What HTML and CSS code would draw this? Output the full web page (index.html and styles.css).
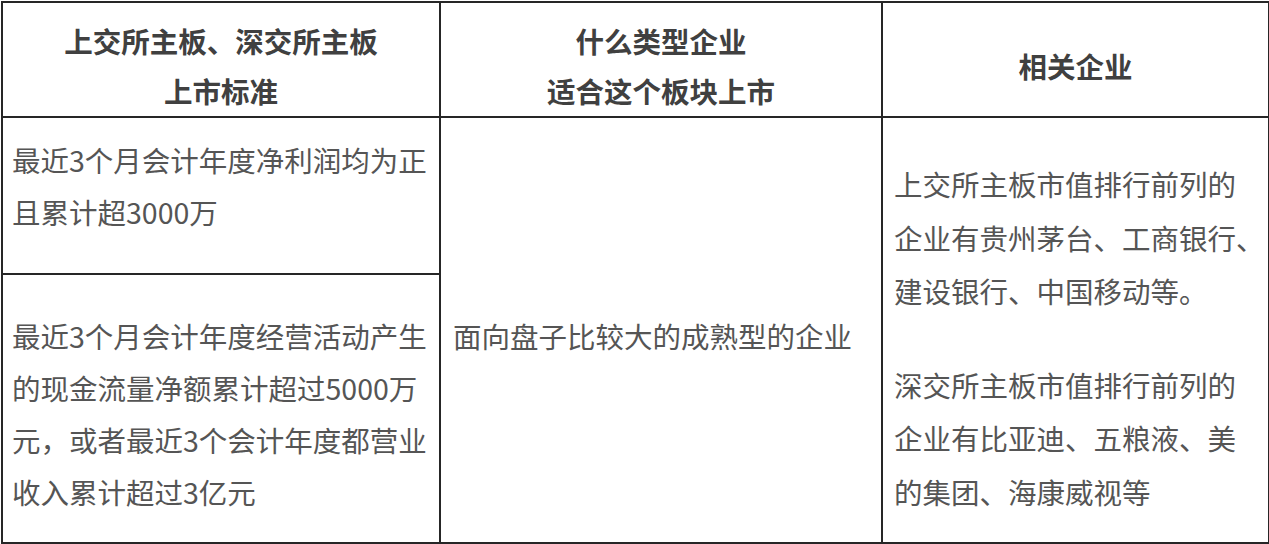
FILE: index.html
```html
<!DOCTYPE html>
<html lang="zh-CN">
<head>
<meta charset="utf-8">
<link rel="stylesheet" href="styles.css">
</head>
<body>
<table class="grid">
  <colgroup>
    <col class="c1">
    <col class="c2">
    <col class="c3">
  </colgroup>
  <thead>
    <tr class="head">
      <th>上交所主板、深交所主板<br>上市标准</th>
      <th>什么类型企业<br>适合这个板块上市</th>
      <th>相关企业</th>
    </tr>
  </thead>
  <tbody>
    <tr class="r1">
      <td class="cell top">最近3个月会计年度净利润均为正<br>且累计超3000万</td>
      <td class="cell mid" rowspan="2">面向盘子比较大的成熟型的企业</td>
      <td class="cell right" rowspan="2">
        <p class="para">上交所主板市值排行前列的<br>企业有贵州茅台、工商银行、<br>建设银行、中国移动等。</p>
        <p class="para second">深交所主板市值排行前列的<br>企业有比亚迪、五粮液、美<br>的集团、海康威视等</p>
      </td>
    </tr>
    <tr class="r2">
      <td class="cell bottom">最近3个月会计年度经营活动产生<br>的现金流量净额累计超过5000万<br>元，或者最近3个会计年度都营业<br>收入累计超过3亿元</td>
    </tr>
  </tbody>
</table>
</body>
</html>
```
FILE: styles.css
```css
html, body {
  margin: 0;
  padding: 0;
  background: #ffffff;
}
body {
  padding: 1px 0 0 1px;
  font-family: "Microsoft YaHei", "Noto Sans CJK SC", sans-serif;
}
.grid {
  border-collapse: collapse;
  table-layout: fixed;
  width: 1267px;
}
.c1 { width: 438px; }
.c2 { width: 442px; }
.c3 { width: 387px; }
.grid th, .grid td {
  border: 2px solid #262626;
}
.head th {
  height: 99px;
  padding: 13px 0 0 0;
  font-size: 28.5px;
  font-weight: 700;
  line-height: 50px;
  color: #404040;
  text-align: center;
  vertical-align: middle;
}
.cell {
  font-size: 28.5px;
  font-weight: 400;
  line-height: 52px;
  color: #555555;
  text-align: left;
  vertical-align: middle;
  white-space: nowrap;
}
.r1 .top {
  height: 135px;
  padding: 0 0 20px 9px;
}
.r2 .bottom {
  height: 257px;
  padding: 10px 0 0 9px;
}
.mid {
  padding: 11px 0 0 12px;
}
.right {
  vertical-align: top;
  padding: 39px 0 0 11px;
  line-height: 53.5px;
}
.para {
  margin: 0;
}
.second {
  margin-top: 40px;
}
```
